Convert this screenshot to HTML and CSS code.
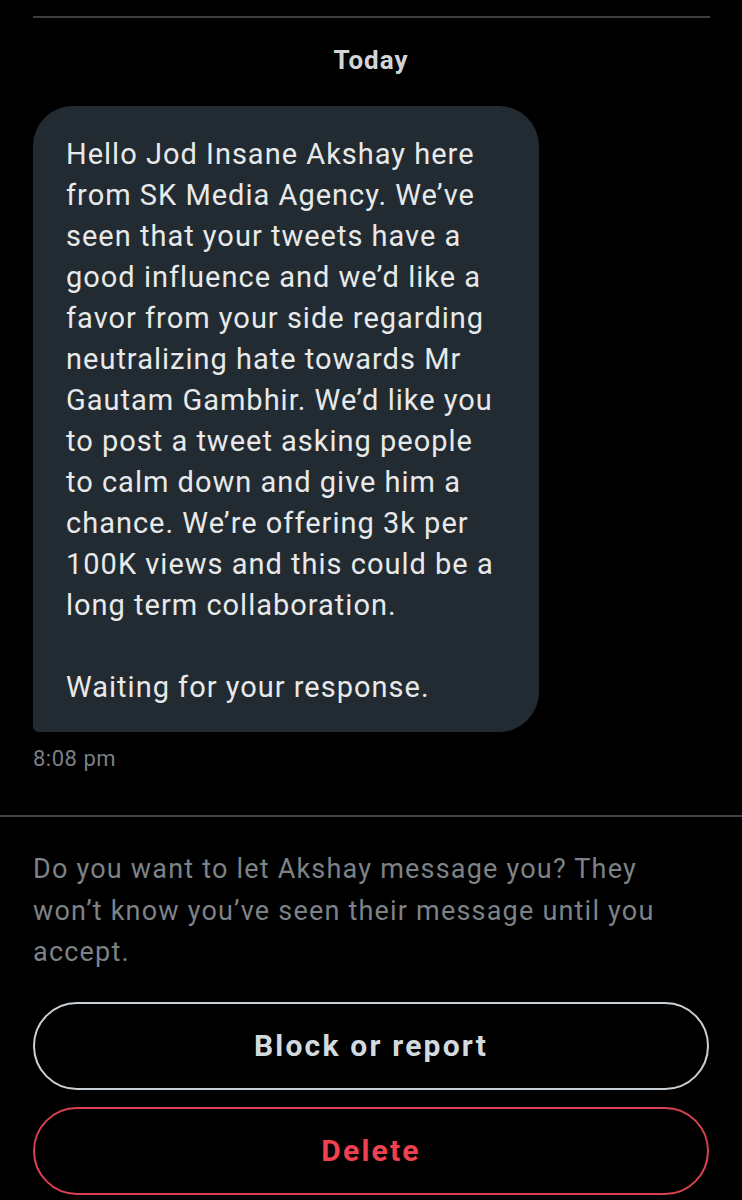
FILE: index.html
```html
<!DOCTYPE html>
<html lang="en">
<head>
<meta charset="utf-8">
<title>Message request</title>
<link rel="stylesheet" href="styles.css">
</head>
<body>
<main class="screen">
  <section class="thread">
    <div class="top-rule"></div>
    <div class="day">Today</div>
    <div class="bubble">
      <p class="bubble-text">Hello Jod Insane Akshay here<br>from SK Media Agency. We’ve<br>seen that your tweets have a<br>good influence and we’d like a<br>favor from your side regarding<br>neutralizing hate towards Mr<br>Gautam Gambhir. We’d like you<br>to post a tweet asking people<br>to calm down and give him a<br>chance. We’re offering 3k per<br>100K views and this could be a<br>long term collaboration.<br><br>Waiting for your response.</p>
    </div>
    <div class="time">8:08 pm</div>
  </section>
  <div class="divider"></div>
  <section class="request">
    <p class="request-text">Do you want to let Akshay message you? They won’t know you’ve seen their message until you accept.</p>
    <div class="actions">
      <button class="btn btn-neutral" type="button">Block or report</button>
      <button class="btn btn-danger" type="button">Delete</button>
    </div>
  </section>
</main>
</body>
</html>
```

FILE: styles.css
```css
* { box-sizing: border-box; }

html, body {
  margin: 0;
  padding: 0;
  background: #000;
}

body {
  font-family: Roboto, "Noto Sans", "Liberation Sans", sans-serif;
  color: #e7e9ea;
}

.screen {
  width: 742px;
  height: 1200px;
  overflow: hidden;
}

.thread {
  padding: 16px 33px 0;
}

.top-rule {
  height: 2px;
  background: #3a3e42;
  margin-right: -1px;
}

.day {
  margin-top: 27px;
  text-align: center;
  font-size: 26px;
  line-height: 30px;
  font-weight: 700;
  letter-spacing: 1px;
  color: #d2d5d7;
}

.bubble {
  margin-top: 31px;
  width: 506px;
  background: #232b32;
  border-radius: 40px 40px 40px 6px;
  padding: 28px 10px 24px 33px;
}

.bubble-text {
  margin: 0;
  font-size: 29px;
  line-height: 41px;
  letter-spacing: 1px;
  white-space: nowrap;
  color: #e7e9ea;
}

.time {
  margin-top: 14px;
  font-size: 22px;
  line-height: 26px;
  letter-spacing: 0.5px;
  color: #7a7f84;
}

.divider {
  margin-top: 43px;
  height: 2px;
  background: #3e4246;
}

.request {
  padding: 32px 33px 0;
}

.request-text {
  margin: 0;
  font-size: 27px;
  line-height: 41.5px;
  letter-spacing: 1.2px;
  color: #7d8287;
  max-width: 668px;
}

.actions {
  margin-top: 28px;
  display: flex;
  flex-direction: column;
  gap: 17px;
}

.btn {
  height: 88px;
  width: 100%;
  border-radius: 9999px;
  background: transparent;
  font-family: Roboto, "Noto Sans", "Liberation Sans", sans-serif;
  font-size: 30px;
  font-weight: 700;
  letter-spacing: 2.2px;
  cursor: pointer;
}

.btn-neutral {
  border: 2px solid #c9d1d6;
  color: #d3dadf;
}

.btn-danger {
  border: 2px solid #d9414e;
  color: #f0414f;
}
```
